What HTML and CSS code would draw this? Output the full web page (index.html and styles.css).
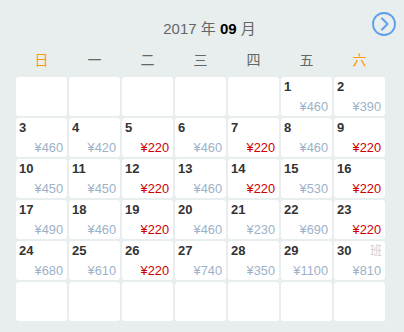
FILE: index.html
```html
<!DOCTYPE html>
<html>
<head>
<meta charset="utf-8">
<link rel="stylesheet" href="styles.css">
</head>
<body>
<div class="page">
  <div class="header">
    <div class="title">2017 年 <b>09</b> 月</div>
    <div class="next">
      <svg width="24" height="24" viewBox="0 0 24 24"><circle cx="12" cy="12" r="11" fill="none" stroke="#5b9ee9" stroke-width="1.8"/><path d="M10 6.5 L15.5 12 L10 17.5" fill="none" stroke="#5b9ee9" stroke-width="2" stroke-linecap="round" stroke-linejoin="round"/></svg>
    </div>
  </div>
  <div class="weekdays">
    <span class="we">日</span><span>一</span><span>二</span><span>三</span><span>四</span><span>五</span><span class="we">六</span>
  </div>
  <div class="grid">
    <div class="cell"></div><div class="cell"></div><div class="cell"></div><div class="cell"></div><div class="cell"></div>
    <div class="cell"><div class="top"><span class="d">1</span></div><span class="p">¥460</span></div>
    <div class="cell"><div class="top"><span class="d">2</span></div><span class="p">¥390</span></div>

    <div class="cell"><div class="top"><span class="d">3</span></div><span class="p">¥460</span></div>
    <div class="cell"><div class="top"><span class="d">4</span></div><span class="p">¥420</span></div>
    <div class="cell"><div class="top"><span class="d">5</span></div><span class="p low">¥220</span></div>
    <div class="cell"><div class="top"><span class="d">6</span></div><span class="p">¥460</span></div>
    <div class="cell"><div class="top"><span class="d">7</span></div><span class="p low">¥220</span></div>
    <div class="cell"><div class="top"><span class="d">8</span></div><span class="p">¥460</span></div>
    <div class="cell"><div class="top"><span class="d">9</span></div><span class="p low">¥220</span></div>

    <div class="cell"><div class="top"><span class="d">10</span></div><span class="p">¥450</span></div>
    <div class="cell"><div class="top"><span class="d">11</span></div><span class="p">¥450</span></div>
    <div class="cell"><div class="top"><span class="d">12</span></div><span class="p low">¥220</span></div>
    <div class="cell"><div class="top"><span class="d">13</span></div><span class="p">¥460</span></div>
    <div class="cell"><div class="top"><span class="d">14</span></div><span class="p low">¥220</span></div>
    <div class="cell"><div class="top"><span class="d">15</span></div><span class="p">¥530</span></div>
    <div class="cell"><div class="top"><span class="d">16</span></div><span class="p low">¥220</span></div>

    <div class="cell"><div class="top"><span class="d">17</span></div><span class="p">¥490</span></div>
    <div class="cell"><div class="top"><span class="d">18</span></div><span class="p">¥460</span></div>
    <div class="cell"><div class="top"><span class="d">19</span></div><span class="p low">¥220</span></div>
    <div class="cell"><div class="top"><span class="d">20</span></div><span class="p">¥460</span></div>
    <div class="cell"><div class="top"><span class="d">21</span></div><span class="p">¥230</span></div>
    <div class="cell"><div class="top"><span class="d">22</span></div><span class="p">¥690</span></div>
    <div class="cell"><div class="top"><span class="d">23</span></div><span class="p low">¥220</span></div>

    <div class="cell"><div class="top"><span class="d">24</span></div><span class="p">¥680</span></div>
    <div class="cell"><div class="top"><span class="d">25</span></div><span class="p">¥610</span></div>
    <div class="cell"><div class="top"><span class="d">26</span></div><span class="p low">¥220</span></div>
    <div class="cell"><div class="top"><span class="d">27</span></div><span class="p">¥740</span></div>
    <div class="cell"><div class="top"><span class="d">28</span></div><span class="p">¥350</span></div>
    <div class="cell"><div class="top"><span class="d">29</span></div><span class="p">¥1100</span></div>
    <div class="cell"><div class="top"><span class="d">30</span><span class="tag">班</span></div><span class="p">¥810</span></div>

    <div class="cell"></div><div class="cell"></div><div class="cell"></div><div class="cell"></div><div class="cell"></div><div class="cell"></div><div class="cell"></div>
  </div>
</div>
</body>
</html>
```

FILE: styles.css
```css
html, body {
  margin: 0;
  padding: 0;
  background: #e8eeee;
}
.page {
  width: 404px;
  height: 332px;
  box-sizing: border-box;
  padding: 0 19px 0 16px;
  font-family: "Liberation Sans", "Noto Sans CJK SC", sans-serif;
}
.header {
  position: relative;
  height: 46px;
  display: flex;
  align-items: center;
  justify-content: center;
  padding-top: 8px;
  box-sizing: border-box;
}
.title {
  font-size: 15px;
  color: #666;
  margin-left: 18px;
}
.title b {
  color: #000;
  font-weight: bold;
}
.next {
  position: absolute;
  right: -11px;
  top: 12px;
  width: 24px;
  height: 24px;
}
.next svg {
  display: block;
}
.weekdays {
  display: grid;
  grid-template-columns: repeat(7, 51px);
  column-gap: 2px;
  height: 26px;
  align-items: center;
  font-family: "Noto Sans CJK SC", sans-serif;
  font-size: 14px;
  color: #666;
  margin-bottom: 5px;
}
.weekdays span {
  text-align: center;
  line-height: 18px;
}
.weekdays .we {
  color: #ff9900;
}
.grid {
  display: grid;
  grid-template-columns: repeat(7, 51px);
  grid-auto-rows: 39px;
  gap: 2px;
}
.cell {
  background: #fff;
  border-radius: 3px;
  display: flex;
  flex-direction: column;
  justify-content: space-between;
  padding: 2px 4px 2px 3px;
  box-sizing: border-box;
}
.top {
  display: flex;
  justify-content: space-between;
  align-items: flex-start;
}
.d {
  font-size: 13px;
  font-weight: bold;
  color: #333;
  line-height: 15px;
}
.tag {
  font-family: "Noto Sans CJK SC", sans-serif;
  font-size: 12px;
  line-height: 14px;
  color: #cfcfcf;
  margin-right: -1px;
}
.p {
  align-self: flex-end;
  font-size: 12.8px;
  line-height: 14px;
  color: #9cb2c8;
}
.p.low {
  color: #d00000;
}
```
